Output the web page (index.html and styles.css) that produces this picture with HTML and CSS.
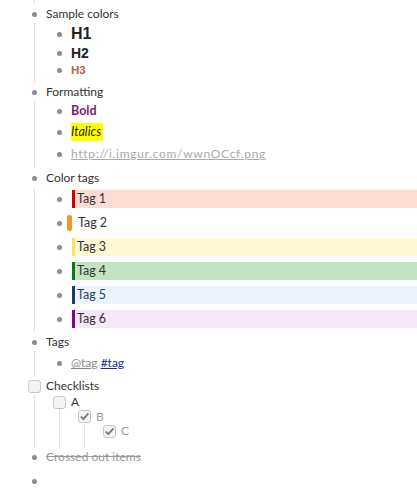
FILE: index.html
```html
<!DOCTYPE html>
<html>
<head>
<meta charset="utf-8">
<link rel="stylesheet" href="styles.css">
</head>
<body>
<div class="outline">
  <div class="stub"></div>
  <ul class="list">
    <li class="item">
      <div class="row r-18"><span class="marker"><span class="dot"></span></span><span class="text">Sample colors</span></div>
      <ul class="list children pad-4">
        <li class="item"><div class="row r-22"><span class="marker"><span class="dot"></span></span><span class="text h1">H1</span></div></li>
        <li class="item"><div class="row r-16"><span class="marker"><span class="dot"></span></span><span class="text h2">H2</span></div></li>
        <li class="item"><div class="row r-18"><span class="marker"><span class="dot"></span></span><span class="text h3">H3</span></div></li>
      </ul>
    </li>
    <li class="item">
      <div class="row r-18"><span class="marker"><span class="dot"></span></span><span class="text">Formatting</span></div>
      <ul class="list children pad-4">
        <li class="item"><div class="row r-20"><span class="marker"><span class="dot"></span></span><span class="text bold">Bold</span></div></li>
        <li class="item"><div class="row r-22"><span class="marker"><span class="dot"></span></span><span class="text"><span class="hl">Italics</span></span></div></li>
        <li class="item"><div class="row r-22"><span class="marker"><span class="dot"></span></span><span class="text link">http://i.imgur.com/wwnOCcf.png</span></div></li>
      </ul>
    </li>
    <li class="item">
      <div class="row r-18"><span class="marker"><span class="dot"></span></span><span class="text">Color tags</span></div>
      <ul class="list children pad-2">
        <li class="item"><div class="row r-24"><span class="marker"><span class="dot"></span></span><span class="tag tag-red">Tag 1</span></div></li>
        <li class="item"><div class="row r-24"><span class="marker"><span class="dot"></span></span><span class="tag-pill">Tag 2</span></div></li>
        <li class="item"><div class="row r-24"><span class="marker"><span class="dot"></span></span><span class="tag tag-yellow">Tag 3</span></div></li>
        <li class="item"><div class="row r-24"><span class="marker"><span class="dot"></span></span><span class="tag tag-green">Tag 4</span></div></li>
        <li class="item"><div class="row r-24"><span class="marker"><span class="dot"></span></span><span class="tag tag-blue">Tag 5</span></div></li>
        <li class="item"><div class="row r-24"><span class="marker"><span class="dot"></span></span><span class="tag tag-purple">Tag 6</span></div></li>
      </ul>
    </li>
    <li class="item">
      <div class="row r-18"><span class="marker"><span class="dot"></span></span><span class="text">Tags</span></div>
      <ul class="list children pad-2">
        <li class="item"><div class="row r-24"><span class="marker"><span class="dot"></span></span><span class="text"><span class="at">@tag</span> <span class="hash">#tag</span></span></div></li>
      </ul>
    </li>
    <li class="item">
      <div class="row r-18"><span class="marker"><span class="box"></span></span><span class="text">Checklists</span></div>
      <ul class="list children">
        <li class="item">
          <div class="row r-14"><span class="marker"><span class="box"></span></span><span class="text">A</span></div>
          <ul class="list children">
            <li class="item">
              <div class="row r-15"><span class="marker"><span class="box checked"><svg viewBox="0 0 13 13" width="13" height="13"><polyline points="2.8,6.6 5.4,9.2 10.4,3.4" fill="none" stroke="#7a7a7a" stroke-width="1.8"/></svg></span></span><span class="text done">B</span></div>
              <ul class="list children pad-9">
                <li class="item"><div class="row r-14"><span class="marker"><span class="box checked"><svg viewBox="0 0 13 13" width="13" height="13"><polyline points="2.8,6.6 5.4,9.2 10.4,3.4" fill="none" stroke="#7a7a7a" stroke-width="1.8"/></svg></span></span><span class="text done">C</span></div></li>
              </ul>
            </li>
          </ul>
        </li>
      </ul>
    </li>
    <li class="item">
      <div class="row r-20"><span class="marker"><span class="dot"></span></span><span class="text crossed">Crossed out items</span></div>
    </li>
    <li class="item gap-4">
      <div class="row r-20"><span class="marker"><span class="dot"></span></span><span class="text"></span></div>
    </li>
  </ul>
</div>
</body>
</html>
```

FILE: styles.css
```css
* { box-sizing: border-box; }
body {
  margin: 0;
  background: #fff;
  font-family: Lato, "Open Sans", sans-serif;
  font-size: 12px;
  color: #333;
}
.outline { padding-left: 28px; }
.list { list-style: none; margin: 0; padding: 0; }
.stub { margin-left: 6px; height: 5px; border-left: 1px solid #e2e2e2; }
.children { margin-left: 6px; padding-left: 18px; border-left: 1px solid #e2e2e2; }
.pad-2 { padding-bottom: 2px; }
.pad-4 { padding-bottom: 4px; }
.pad-9 { padding-bottom: 9px; }
.gap-4 { margin-top: 4px; }
.row { display: flex; align-items: center; }
.r-14 { height: 14px; }
.r-15 { height: 15px; }
.r-16 { height: 16px; }
.r-18 { height: 18px; }
.r-20 { height: 20px; }
.r-22 { height: 22px; }
.r-24 { height: 24px; }
.marker { width: 13px; height: 13px; flex: none; display: flex; align-items: center; justify-content: center; }
.dot { width: 5px; height: 5px; border-radius: 50%; background: #8c8c8c; }
.text { margin-left: 5px; white-space: nowrap; line-height: 16px; }
.h1 { font-family: "Liberation Sans", Arial, sans-serif; font-weight: bold; font-size: 16px; color: #222; }
.h2 { font-family: "Liberation Sans", Arial, sans-serif; font-weight: bold; font-size: 14px; color: #222; }
.h3 { font-family: "Liberation Sans", Arial, sans-serif; font-weight: bold; font-size: 11.5px; color: #a5674c; }
.bold { font-weight: bold; color: #7a1a7e; font-size: 12.5px; }
.hl { background: #ffff00; font-style: italic; color: #222; padding: 1px 2px 2px 0; font-size: 12.5px; }
.link { color: #aaa; text-decoration: underline; letter-spacing: 0.7px; }
.at { color: #8a8a8a; text-decoration: underline; }
.hash { color: #1c2a8a; text-decoration: underline; }
.tag {
  flex: 1;
  height: 18px;
  margin-left: 6px;
  padding-left: 2px;
  border-left: 3px solid;
  line-height: 18px;
  color: #333;
  font-size: 12.5px;
}
.tag-red { border-color: #d40000; background: #fddcd5; }
.tag-yellow { border-color: #f8e071; background: #fff8d2; }
.tag-green { border-color: #0b7a12; background: #c4e2c4; }
.tag-blue { border-color: #1b3c78; background: #eef4fd; color: #24406e; }
.tag-purple { border-color: #7c0a7c; background: #f5e6f9; }
.tag-pill {
  position: relative;
  margin-left: 1px;
  padding-left: 11px;
  height: 16px;
  line-height: 16px;
  color: #333;
  font-size: 12.5px;
}
.tag-pill::before {
  content: "";
  position: absolute;
  left: 0;
  top: 0;
  width: 5px;
  height: 16px;
  border-radius: 2px;
  background: #f7941d;
}
.box {
  width: 13px;
  height: 13px;
  border: 1px solid #c8c8c8;
  border-radius: 3px;
  background: #f4f4f4;
  display: block;
}
.box svg { display: block; margin: -1px 0 0 -1px; }
.done { color: #999; }
.crossed { color: #999; text-decoration: line-through; }
```
